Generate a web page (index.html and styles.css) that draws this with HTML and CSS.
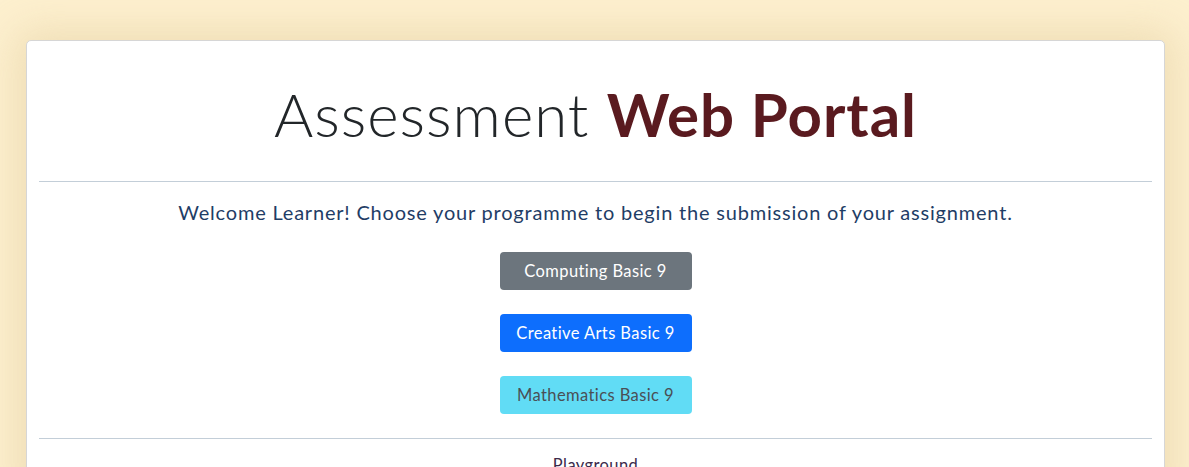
FILE: index.html
```html
<!DOCTYPE html>
<html lang="en">
<head>
<meta charset="utf-8">
<title>Assessment Web Portal</title>
<link rel="stylesheet" href="styles.css">
</head>
<body>
<main class="card">
  <header class="hero">
    <h1 class="title"><span class="thin">Assessment</span> <strong class="brand">Web Portal</strong></h1>
  </header>
  <hr class="rule">
  <section class="content">
    <p class="welcome">Welcome Learner! Choose your programme to begin the submission of your assignment.</p>
    <div class="buttons">
      <a class="btn btn-gray" href="#">Computing Basic 9</a>
      <a class="btn btn-blue" href="#">Creative Arts Basic 9</a>
      <a class="btn btn-cyan" href="#">Mathematics Basic 9</a>
    </div>
  </section>
  <hr class="rule">
  <footer class="foot">Playground</footer>
</main>
</body>
</html>
```

FILE: styles.css
```css
html, body {
  margin: 0;
  padding: 0;
}
body {
  background: #fdf0cf;
  font-family: Lato, "Noto Sans", sans-serif;
  height: 467px;
  overflow: hidden;
}
.card {
  margin: 40px 24px 0 26px;
  background: #ffffff;
  border: 1px solid #d6d6d6;
  border-radius: 5px;
  padding: 0 12px;
  box-shadow: 0 0 40px 10px rgba(225, 200, 150, 0.45);
  min-height: 460px;
}
.hero {
  padding-top: 37px;
  padding-bottom: 31px;
  text-align: center;
}
.title {
  margin: 0;
  font-size: 60px;
  line-height: 1.2;
  font-weight: 300;
  letter-spacing: 1px;
  color: #222629;
}
.thin {
  font-weight: 300;
}
.brand {
  font-weight: 700;
  color: #5a1a1f;
}
.rule {
  margin: 0;
  border: 0;
  border-top: 1px solid #c3ced8;
}
.content {
  text-align: center;
  padding-top: 16px;
  padding-bottom: 24px;
}
.welcome {
  margin: 0 0 26px;
  font-size: 20px;
  line-height: 28px;
  letter-spacing: 0.8px;
  color: #1f3d66;
}
.buttons {
  display: flex;
  flex-direction: column;
  align-items: center;
  gap: 24px;
}
.btn {
  display: flex;
  align-items: center;
  justify-content: center;
  width: 192px;
  height: 38px;
  box-sizing: border-box;
  border-radius: 4px;
  font-size: 16.5px;
  letter-spacing: 0.4px;
  text-decoration: none;
  color: #ffffff;
}
.btn-gray {
  background: #6c757d;
}
.btn-blue {
  background: #0d6efd;
}
.btn-cyan {
  background: #61dcf5;
  color: #4a4f55;
}
.foot {
  text-align: center;
  padding-top: 16px;
  font-size: 16.5px;
  letter-spacing: 0.4px;
  color: #3b2a4a;
}
```
